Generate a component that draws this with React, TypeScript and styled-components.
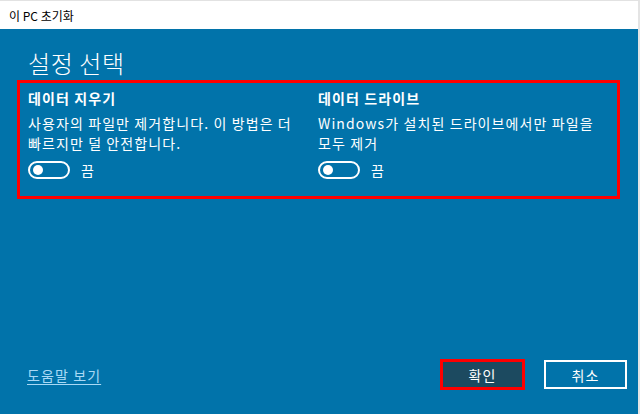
import React, { useState } from 'react';
import styled, { createGlobalStyle } from 'styled-components';

const GlobalStyle = createGlobalStyle`
  html, body {
    margin: 0;
    padding: 0;
    background: #ffffff;
  }
  body {
    font-family: "Noto Sans CJK KR", "Noto Sans", "Liberation Sans", sans-serif;
    word-break: keep-all;
  }
`;

const Window = styled.div`
  display: flex;
  flex-direction: column;
  width: 640px;
  height: 414px;
  box-sizing: border-box;
  border-top: 1px solid #e2e2e2;
  border-right: 2px solid #e4e4e4;
  overflow: hidden;
`;

const TitleBar = styled.div`
  display: flex;
  align-items: center;
  height: 28px;
  padding-left: 9px;
  background: #ffffff;
  color: #000000;
  font-size: 12px;
`;

const Body = styled.div`
  flex: 1;
  display: flex;
  flex-direction: column;
  background: #0173aa;
  color: #ffffff;
`;

const Heading = styled.h1`
  margin: 17px 0 0 28px;
  font-size: 24px;
  font-weight: 300;
  line-height: 34px;
  letter-spacing: 0.6px;
`;

const Options = styled.div`
  display: grid;
  grid-template-columns: 290px 1fr;
  width: 603px;
  margin-left: 17px;
  box-sizing: border-box;
  padding: 5px 8px 16px 8px;
  border: 3px solid #ff0000;
`;

const Option = styled.div`
  display: flex;
  flex-direction: column;
  padding-right: 4px;
`;

const OptionTitle = styled.div`
  font-size: 14px;
  font-weight: 700;
  line-height: 20px;
  letter-spacing: 1.1px;
  margin-bottom: 5px;
`;

const OptionText = styled.div`
  font-size: 14px;
  line-height: 20px;
  letter-spacing: 1.1px;
`;

const ToggleRow = styled.label`
  display: flex;
  align-items: center;
  gap: 11px;
  margin-top: 7px;
  font-size: 14px;
  cursor: pointer;
`;

const Track = styled.span<{ $on: boolean }>`
  position: relative;
  display: block;
  width: 42px;
  height: 18px;
  box-sizing: border-box;
  border: 2px solid #ffffff;
  border-radius: 9px;
  background: ${p => (p.$on ? '#ffffff' : 'transparent')};
`;

const Knob = styled.span<{ $on: boolean }>`
  position: absolute;
  top: 2px;
  left: ${p => (p.$on ? '25px' : '3px')};
  width: 10px;
  height: 10px;
  border-radius: 50%;
  background: ${p => (p.$on ? '#0173aa' : '#ffffff')};
`;

const Spacer = styled.div`
  flex: 1;
`;

const Footer = styled.div`
  display: flex;
  align-items: center;
  padding: 0 11px 24px 27px;
`;

const HelpLink = styled.a`
  flex: 1;
  font-size: 14px;
  letter-spacing: 1.1px;
  color: #a9d9f5;
  text-decoration: underline;
  text-underline-offset: 3px;
  cursor: pointer;
`;

const Button = styled.button<{ $primary?: boolean }>`
  display: flex;
  align-items: center;
  justify-content: center;
  box-sizing: border-box;
  width: ${p => (p.$primary ? '85px' : '83px')};
  height: ${p => (p.$primary ? '31px' : '29px')};
  margin-left: ${p => (p.$primary ? '0' : '19px')};
  padding: 0;
  font-family: inherit;
  font-size: 14px;
  letter-spacing: 1px;
  color: #ffffff;
  background: ${p => (p.$primary ? '#1c4a60' : 'transparent')};
  border: ${p => (p.$primary ? '3px solid #ff0000' : '2px solid #ffffff')};
  cursor: pointer;
`;

const Toggle: React.FC<{ on: boolean; onChange: () => void }> = ({ on, onChange }) => (
  <ToggleRow onClick={onChange}>
    <Track $on={on}>
      <Knob $on={on} />
    </Track>
    {on ? '켬' : '끔'}
  </ToggleRow>
);

export default function App() {
  const [wipe, setWipe] = useState(false);
  const [drives, setDrives] = useState(false);

  return (
    <Window>
      <GlobalStyle />
      <TitleBar>이 PC 초기화</TitleBar>
      <Body>
        <Heading>설정 선택</Heading>
        <Options>
          <Option>
            <OptionTitle>데이터 지우기</OptionTitle>
            <OptionText>사용자의 파일만 제거합니다. 이 방법은 더 빠르지만 덜 안전합니다.</OptionText>
            <Toggle on={wipe} onChange={() => setWipe(v => !v)} />
          </Option>
          <Option>
            <OptionTitle>데이터 드라이브</OptionTitle>
            <OptionText>Windows가 설치된 드라이브에서만 파일을 모두 제거</OptionText>
            <Toggle on={drives} onChange={() => setDrives(v => !v)} />
          </Option>
        </Options>
        <Spacer />
        <Footer>
          <HelpLink>도움말 보기</HelpLink>
          <Button $primary>확인</Button>
          <Button>취소</Button>
        </Footer>
      </Body>
    </Window>
  );
}
